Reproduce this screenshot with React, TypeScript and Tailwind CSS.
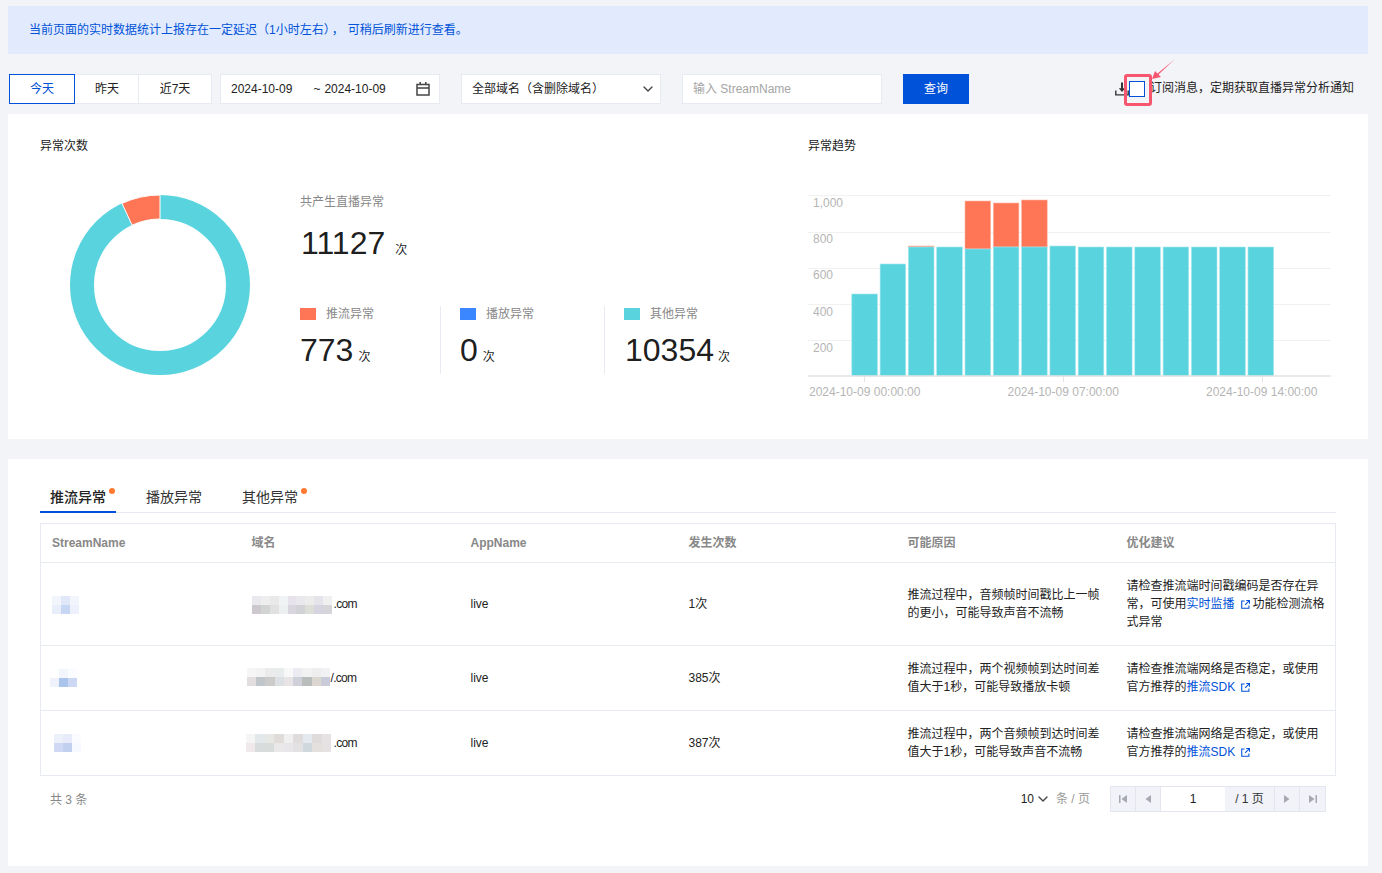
import React from "react";
import { ChevronDown } from "lucide-react";

const Ext = () => (
  <svg width="9" height="9" viewBox="0 0 10 10" className="inline-block align-[-1px] ml-[6px] mr-[3px]" fill="none" stroke="#0052d9" strokeWidth="1.2">
    <path d="M4 1.2H.8v8h8V6" />
    <path d="M5.8.6h3.6v3.6M9.2.8 4.6 5.4" />
  </svg>
);

const Mosaic = ({ w, rows, className = "" }: { w: number; rows: string[][]; className?: string }) => {
  const cols = rows[0].length;
  return (
    <svg width={w} height={18} viewBox={`0 0 ${cols} ${rows.length}`} preserveAspectRatio="none" className={"block shrink-0 " + className} shapeRendering="crispEdges">
      {rows.map((r, y) =>
        r.map((c, x) => <rect key={x + "-" + y} x={x} y={y} width={1} height={1} fill={c} />)
      )}
    </svg>
  );
};

const streamMosaics = [
  [["#f3f5fc", "#dfe7f8", "#f3f5fc"], ["#e9eefb", "#c7d6f3", "#edf1fc"]],
  [["#ffffff", "#f3f5fc", "#fbfcff"], ["#eff1fb", "#aac4ec", "#cdd9f4"]],
  [["#ecf0fb", "#e8ecfa", "#f9fbff"], ["#cfd9f4", "#c2d0f0", "#f6f9ff"]],
];
const domainMosaics = [
  [
    ["#e9e9ee", "#eeeeef", "#e9e9ea", "#f1f2f3", "#e6e4ea", "#e9e9ec", "#ececec", "#e4e4ea", "#f0f0f1"],
    ["#cdc8ce", "#d2d3d3", "#e1e1e2", "#edf0f1", "#d9d6e0", "#d2d3d7", "#dcdfd8", "#d5d4e0", "#d6d6da"],
  ],
  [
    ["#f6f6f7", "#f3f3f4", "#ecebeb", "#e9eced", "#f8f8f8", "#ebebf1", "#f2f2f2", "#eeeeee", "#f2f2f4"],
    ["#e2dee0", "#c0c6ca", "#cdcbc9", "#dcdfe3", "#e8e4e6", "#cfd0da", "#b9bdbb", "#dcd6d0", "#c9ccd8"],
  ],
  [
    ["#f6f5f6", "#e3e9ea", "#e7e7e6", "#e0dcda", "#f0f0f0", "#e0dcdc", "#e3e9ec", "#dfdbda", "#e6e2e4"],
    ["#f0e9ec", "#d9dcdc", "#d8dcdb", "#ebe8ea", "#e8e6e8", "#e3e1e2", "#cfd8dc", "#e3e0de", "#e6e2e4"],
  ],
];

const rows = [
  { stream: 0, dm: 0, domW: 80, off: "mt-[2px]", com: ".com", comOff: "ml-[2px]", streamOff: "mt-[2px]", count: "1次", reason: "推流过程中，音频帧时间戳比上一帧的更小，可能导致声音不流畅", link: "实时监播", pre: "请检查推流端时间戳编码是否存在异常，可使用", post: "功能检测流格式异常" },
  { stream: 1, dm: 1, domW: 83, off: "ml-[-5px] mb-[2px]", com: "/.com", comOff: "ml-[1px]", streamOff: "ml-[-2px] mt-[-1px]", count: "385次", reason: "推流过程中，两个视频帧到达时间差值大于1秒，可能导致播放卡顿", link: "推流SDK", pre: "请检查推流端网络是否稳定，或使用官方推荐的", post: "" },
  { stream: 2, dm: 2, domW: 85, off: "ml-[-6px]", com: ".com", comOff: "ml-[3px]", streamOff: "ml-[2px]", count: "387次", reason: "推流过程中，两个音频帧到达时间差值大于1秒，可能导致声音不流畅", link: "推流SDK", pre: "请检查推流端网络是否稳定，或使用官方推荐的", post: "" },
];

const bars: [number, number][] = [
  [294, 294], [264, 264], [247, 246], [247, 247], [249, 201], [247, 203], [247, 200],
  [246, 246], [247, 247], [247, 247], [247, 247], [247, 247], [247, 247], [247, 247], [247, 247],
];

function Donut() {
  return (
    <svg width="180" height="180" viewBox="0 0 180 180" className="block shrink-0">
      <circle cx="90" cy="90" r="78" fill="none" stroke="#59d4df" strokeWidth="24" />
      <path d="M90 0 A90 90 0 0 0 52 8.4 L62.1 30.2 A66 66 0 0 1 90 24 Z" fill="#ff7656" stroke="#fff" strokeWidth="1" />
    </svg>
  );
}

function Chart() {
  const grid = [195, 232, 268, 304, 340];
  return (
    <svg width="530" height="220" viewBox="804 190 530 220" className="block">
      {grid.map((y) => (
        <line key={y} x1="808" x2="1331" y1={y + 0.5} y2={y + 0.5} stroke="#f1f1f1" strokeWidth="1" />
      ))}
      {[["1,000", 207], ["800", 243], ["600", 279], ["400", 316], ["200", 352]].map(([t, y]) => (
        <text key={t} x="813" y={y} fontSize="12" fill="#b5b5b5">{t}</text>
      ))}
      {bars.map(([teal, top], i) => {
        const x = 851.8 + i * 28.3;
        return (
          <g key={i}>
            {top < teal && <rect x={x} y={top} width="25.6" height={teal - top} fill="#ff7656" stroke="#ffb5a3" strokeWidth="0.6" />}
            <rect x={x} y={teal} width="25.6" height={376 - teal} fill="#59d4df" stroke="#a5e7ed" strokeWidth="0.6" />
          </g>
        );
      })}
      <line x1="808" x2="1331" y1="376" y2="376" stroke="#e3e3e3" strokeWidth="1.5" />
      {[864.5, 1063.5, 1262.5].map((x) => (
        <line key={x} x1={x} x2={x} y1="376" y2="382" stroke="#e3e3e3" />
      ))}
      {[["2024-10-09 00:00:00", 809], ["2024-10-09 07:00:00", 1007.5], ["2024-10-09 14:00:00", 1206]].map(([t, x]) => (
        <text key={t} x={x} y="396" fontSize="12" fill="#b5b5b5">{t}</text>
      ))}
    </svg>
  );
}

const Stat = ({ color, label, value, w, unitGap, pad = "", divider }: { color: string; label: string; value: string; w: string; unitGap: string; pad?: string; divider?: boolean }) => (
  <div className={w + (divider ? " border-r border-[#e7eaf0]" : "")}>
    <div className="flex items-center h-[18px] mt-[-1px] text-xs text-[#888]">
      <span className="block w-4 h-3" style={{ background: color }} />
      <span className="ml-[10px]">{label}</span>
    </div>
    <div className={"flex items-baseline mt-[7px] h-[40px] text-[32px] leading-[40px] text-black/90 " + pad}>
      {value}
      <span className={"text-xs " + unitGap}>次</span>
    </div>
  </div>
);

const PagerBtn = ({ children }: { children: React.ReactNode }) => (
  <div className="w-[25px] h-full flex items-center justify-center border-r border-[#e3e6ee] last:border-r-0">
    <svg width="10" height="10" viewBox="0 0 10 10" fill="#a6a9b0">{children}</svg>
  </div>
);

export default function App() {
  return (
    <div className="h-[873px] overflow-hidden bg-[#f3f4f8] pt-[6px] pl-[8px] pr-[14px] text-xs text-[#222] [font-family:'Liberation_Sans','Noto_Sans_CJK_SC',sans-serif]">
      <div className="h-12 bg-[#e2ebfd] pl-[21px] flex items-center text-[#0052d9] pb-[1px]">
        <span>当前页面的实时数据统计上报存在一定延迟（1小时左右）</span>
        <span className="ml-[-4px]">，</span>
        <span className="ml-[4px]">可稍后刷新进行查看。</span>
      </div>

      <div className="relative flex items-center h-[30px] mt-5 ml-px">
        <div className="flex h-full">
          <div className="w-[66px] flex items-center justify-center border border-[#0052d9] text-[#0052d9] bg-white">今天</div>
          <div className="w-[64px] pl-px flex items-center justify-center border-y border-r border-[#e7eaf0] bg-white">昨天</div>
          <div className="w-[73px] flex items-center justify-center border-y border-r border-[#e7eaf0] bg-white">近7天</div>
        </div>
        <div className="w-[220px] h-full ml-2 flex items-center bg-white border border-[#e7eaf0] pl-[10px] pr-[9px]">
          <span>2024-10-09</span>
          <span className="ml-[21px]">~</span>
          <span className="ml-[4px]">2024-10-09</span>
          <svg className="ml-auto" width="14" height="14" viewBox="0 0 14 14" fill="none" stroke="#444" strokeWidth="1.5">
            <rect x="1" y="2.5" width="12" height="10.5" />
            <path d="M1 6h12M4.2 0v3M9.8 0v3" />
          </svg>
        </div>
        <div className="w-[200px] h-full ml-[21px] flex items-center bg-white border border-[#e7eaf0] pl-[10px] pr-[4px]">
          <span>全部域名（含删除域名）</span>
          <ChevronDown className="ml-auto" size={16} strokeWidth={2} color="#444" />
        </div>
        <input
          readOnly
          placeholder="输入 StreamName"
          className="w-[200px] h-full ml-[21px] bg-white border border-[#e7eaf0] pl-[10px] outline-none text-xs placeholder:text-[#a5a5a5]"
        />
        <div className="w-[66px] h-full ml-[21px] flex items-center justify-center bg-[#0052d9] text-white">查询</div>

        <div className="ml-auto flex items-center h-full pr-[14px]">
          <svg width="14" height="14" viewBox="0 0 14 14" fill="none" stroke="#333" strokeWidth="1.4" className="mt-[-1px]">
            <path d="M.8 8.5v4.4h12.4V8.5" />
            <path d="M7 .5v7.5" strokeWidth="2" />
            <path d="M3.8 6.2h6.4L7 10z" fill="#333" stroke="none" />
          </svg>
          <div className="w-4 h-4 bg-white border border-[#0052d9]" />
          <span className="ml-[5px] mt-[-2px]">订阅消息，定期获取直播异常分析通知</span>

          <div className="absolute left-[1115px] top-0 w-[28px] h-[32px] border-[3px] border-[#f8566f] rounded-[3px]" />
          <svg className="absolute left-[1143px] top-[-15px]" width="24" height="20" viewBox="0 0 24 20" fill="#f8566f">
            <path d="M23 0 6.5 15.5 9 18 0 20 3 12 5.5 14.5z" />
          </svg>
        </div>
      </div>

      <div className="h-[325px] mt-[10px] bg-white flex pl-8">
        <div className="w-[768px] pt-[23px]">
          <div className="leading-[18px]">异常次数</div>
          <div className="flex">
            <div className="ml-[30px] mt-[40px]">
              <Donut />
            </div>
            <div className="ml-[50px] mt-[38px] w-[460px]">
              <div className="leading-[18px] text-[#888]">共产生直播异常</div>
              <div className="flex items-baseline mt-[10px] h-[44px] pl-px text-[32px] leading-[44px] text-black/90">
                11127
                <span className="text-xs ml-[10px]">次</span>
              </div>
              <div className="flex mt-[41px] h-[68px]">
                <Stat color="#ff7656" label="推流异常" value="773" w="w-[141px]" unitGap="ml-[5px]" divider />
                <div className="w-[19px]" />
                <Stat color="#3a87ff" label="播放异常" value="0" w="w-[145px]" unitGap="ml-[5px]" divider />
                <div className="w-[19px]" />
                <Stat color="#59d4df" label="其他异常" value="10354" w="w-[130px]" unitGap="ml-[4px]" pad="pl-px" />
              </div>
            </div>
          </div>
        </div>
        <div className="pt-[23px] flex-1">
          <div className="leading-[18px]">异常趋势</div>
          <div className="mt-[35px] ml-[-4px]">
            <Chart />
          </div>
        </div>
      </div>

      <div className="h-[407px] mt-5 bg-white px-8 pt-[25px]">
        <div className="flex h-[29px] border-b border-[#e7eaf0]">
          <div className="relative w-[76px] h-[29px] text-center text-sm font-medium leading-[26px] border-b-2 border-[#0052d9] text-[#222]">
            推流异常
            <span className="absolute left-[69px] top-[4px] w-[6px] h-[6px] rounded-full bg-[#ff7a30]" />
          </div>
          <div className="w-[76px] ml-5 text-center text-sm leading-[26px] text-[#333]">播放异常</div>
          <div className="relative w-[76px] ml-5 text-center text-sm leading-[26px] text-[#333]">
            其他异常
            <span className="absolute left-[69px] top-[4px] w-[6px] h-[6px] rounded-full bg-[#ff7a30]" />
          </div>
        </div>

        <table className="w-[1295px] mt-[10px] table-fixed border-collapse border border-[#e7eaf0]">
          <colgroup>
            <col className="w-[200px]" />
            <col className="w-[219px]" />
            <col className="w-[218px]" />
            <col className="w-[219px]" />
            <col className="w-[219px]" />
            <col className="w-[220px]" />
          </colgroup>
          <thead>
            <tr className="h-[39px] text-left text-[#888] font-bold">
              {["StreamName", "域名", "AppName", "发生次数", "可能原因", "优化建议"].map((h) => (
                <th key={h} className="pl-[11px] pr-[10px] font-bold text-xs">{h}</th>
              ))}
            </tr>
          </thead>
          <tbody>
            {rows.map((r, i) => (
              <tr key={i} className="border-t border-[#e7eaf0] leading-[18px]">
                <td className="pl-[11px] pr-[10px] py-[14px]">
                  <Mosaic w={27} rows={streamMosaics[r.stream]} className={r.streamOff} />
                </td>
                <td className="pl-[11px] pr-[10px] py-[14px]">
                  <div className="flex items-center">
                    <Mosaic w={r.domW} rows={domainMosaics[r.dm]} className={r.off} />
                    <span className={r.comOff + " tracking-[-0.7px]"}>{r.com}</span>
                  </div>
                </td>
                <td className="pl-[11px] pr-[10px] py-[14px]">live</td>
                <td className="pl-[11px] pr-[10px] py-[14px]">{r.count}</td>
                <td className="pl-[11px] pr-[10px] py-[14px]">{r.reason}</td>
                <td className="pl-[11px] pr-[9px] py-[14px]">
                  {r.pre}
                  <span className="text-[#0052d9]">{r.link}</span>
                  <Ext />
                  {r.post}
                </td>
              </tr>
            ))}
          </tbody>
        </table>

        <div className="flex items-center h-[26px] mt-[10px]">
          <span className="ml-[10px] mt-[2px] text-[#888]">共 3 条</span>
          <span className="ml-auto">10</span>
          <ChevronDown className="ml-[1px]" size={16} strokeWidth={2} color="#444" />
          <span className="ml-[5px] text-[#999]">条 / 页</span>
          <div className="ml-5 mr-[10px] flex items-center h-[26px] w-[216px] border border-[#e3e6ee] bg-[#f1f3f8]">
            <PagerBtn><path d="M1 1h1.5v8H1zM9 1v8L3.5 5z" /></PagerBtn>
            <PagerBtn><path d="M8 1v8L2.5 5z" /></PagerBtn>
            <div className="w-[64px] h-full bg-white text-center leading-[24px] text-[#222]">1</div>
            <div className="w-[50px] h-full text-center leading-[24px] border-r border-[#e3e6ee] text-[#333]">/ 1 页</div>
            <PagerBtn><path d="M2 1v8L7.5 5z" /></PagerBtn>
            <PagerBtn><path d="M1 1v8L6.5 5zM7.5 1H9v8H7.5z" /></PagerBtn>
          </div>
        </div>
      </div>
    </div>
  );
}
